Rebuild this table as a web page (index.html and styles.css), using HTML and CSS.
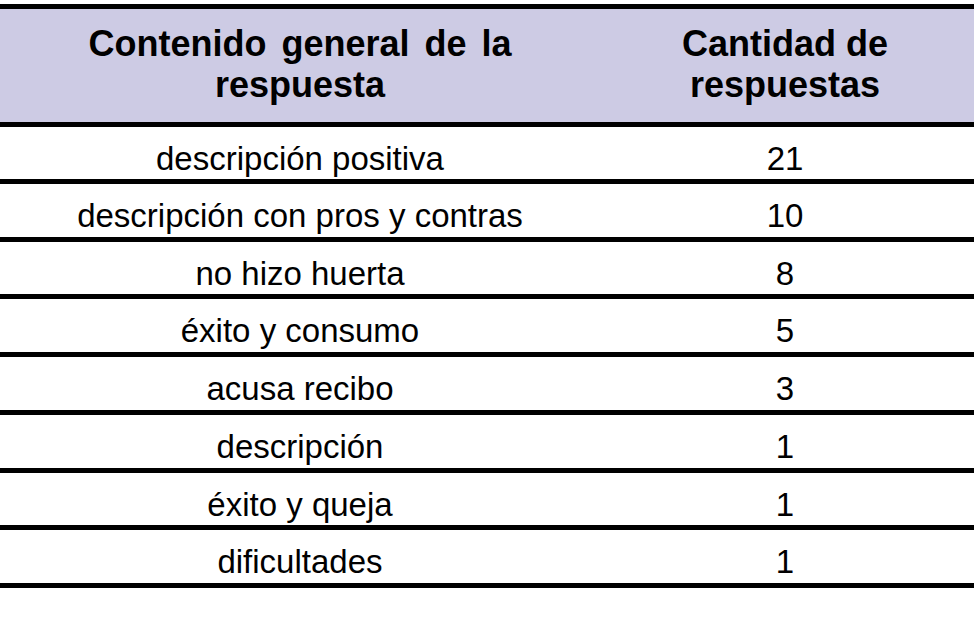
FILE: index.html
```html
<!DOCTYPE html>
<html lang="es">
<head>
<meta charset="utf-8">
<title>Contenido general de la respuesta</title>
<link rel="stylesheet" href="styles.css">
</head>
<body>
<div class="table">
  <div class="row head">
    <div class="cell wide">Contenido general de la<br>respuesta</div>
    <div class="cell num">Cantidad de<br>respuestas</div>
  </div>
  <div class="row short"><div class="cell">descripción positiva</div><div class="cell num">21</div></div>
  <div class="row"><div class="cell">descripción con pros y contras</div><div class="cell num">10</div></div>
  <div class="row short"><div class="cell">no hizo huerta</div><div class="cell num">8</div></div>
  <div class="row"><div class="cell">éxito y consumo</div><div class="cell num">5</div></div>
  <div class="row"><div class="cell">acusa recibo</div><div class="cell num">3</div></div>
  <div class="row"><div class="cell">descripción</div><div class="cell num">1</div></div>
  <div class="row short"><div class="cell">éxito y queja</div><div class="cell num">1</div></div>
  <div class="row"><div class="cell">dificultades</div><div class="cell num">1</div></div>
</div>
</body>
</html>
```
FILE: styles.css
```css
html, body {
  margin: 0;
  padding: 0;
  background: #ffffff;
}
body {
  font-family: "Liberation Sans", Arial, sans-serif;
  color: #000;
}
.table {
  margin-top: 4px;
  width: 974px;
}
.row {
  display: grid;
  grid-template-columns: 600px 1fr;
  border-bottom: 5px solid #000;
  height: 53px;
}
.row.short {
  height: 52px;
}
.head {
  border-top: 5px solid #000;
  background: #cdcbe4;
  height: 113px;
}
.cell {
  text-align: center;
  font-size: 33px;
  line-height: 38px;
  padding-top: 13px;
  white-space: nowrap;
}
.head .cell {
  font-size: 36px;
  font-weight: bold;
  line-height: 41px;
  padding-top: 14px;
}
.head .wide {
  word-spacing: 5px;
}
.num {
  padding-right: 4px;
}
```
